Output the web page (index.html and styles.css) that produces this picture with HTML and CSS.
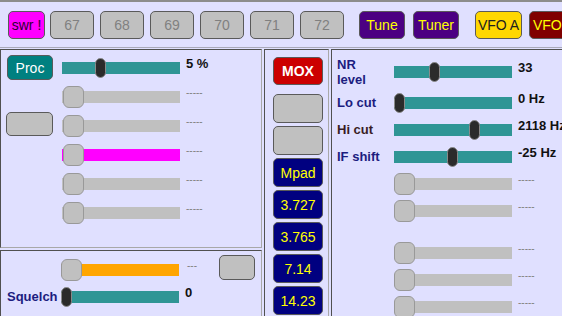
FILE: index.html
```html
<!DOCTYPE html>
<html lang="en">
<head>
    <meta charset="UTF-8">
    <meta name="viewport" content="width=device-width, initial-scale=1.0">
    <title>Radio Control</title>
    <link rel="stylesheet" href="styles.css">
</head>
<body>
    <div class="topbar">
        <button class="btn swr">swr !</button>
        <div class="mem">
            <button class="btn grey">67</button>
            <button class="btn grey">68</button>
            <button class="btn grey">69</button>
            <button class="btn grey">70</button>
            <button class="btn grey">71</button>
            <button class="btn grey">72</button>
        </div>
        <button class="btn tune">Tune</button>
        <button class="btn tune tuner">Tuner</button>
        <button class="btn vfoa">VFO A</button>
        <button class="btn vfob">VFO B</button>
    </div>

    <div class="main">
        <div class="leftcol">
            <div class="panel upper">
                <div class="row">
                    <div class="bcell"><button class="btn proc">Proc</button></div>
                    <div class="track teal"><span class="thumb dark" style="left:33px"></span></div>
                    <span class="val">5 %</span>
                </div>
                <div class="row">
                    <div class="bcell"></div>
                    <div class="track grey"><span class="thumb pale" style="left:1px"></span></div>
                    <span class="val none">-----</span>
                </div>
                <div class="row">
                    <div class="bcell"><button class="btn grey side"></button></div>
                    <div class="track grey"><span class="thumb pale" style="left:1px"></span></div>
                    <span class="val none">-----</span>
                </div>
                <div class="row">
                    <div class="bcell"></div>
                    <div class="track magenta"><span class="thumb pale" style="left:1px"></span></div>
                    <span class="val none">-----</span>
                </div>
                <div class="row">
                    <div class="bcell"></div>
                    <div class="track grey"><span class="thumb pale" style="left:1px"></span></div>
                    <span class="val none">-----</span>
                </div>
                <div class="row">
                    <div class="bcell"></div>
                    <div class="track grey"><span class="thumb pale" style="left:1px"></span></div>
                    <span class="val none">-----</span>
                </div>
            </div>
            <div class="panel lower">
                <div class="lrow">
                    <span class="lbl"></span>
                    <div class="track orange"><span class="thumb pale" style="left:0px"></span></div>
                    <span class="val none lval">---</span>
                    <button class="btn grey small"></button>
                </div>
                <div class="lrow">
                    <span class="lbl">Squelch</span>
                    <div class="track teal"><span class="thumb dark" style="left:0px"></span></div>
                    <span class="val lval zero">0</span>
                </div>
            </div>
        </div>

        <div class="panel middle">
            <button class="btn mox">MOX</button>
            <button class="btn grey">&nbsp;</button>
            <button class="btn grey">&nbsp;</button>
            <button class="btn navy">Mpad</button>
            <button class="btn navy">3.727</button>
            <button class="btn navy">3.765</button>
            <button class="btn navy">7.14</button>
            <button class="btn navy">14.23</button>
        </div>

        <div class="panel right">
            <div class="rrow tall">
                <span class="lbl">NR<br>level</span>
                <div class="track teal"><span class="thumb dark" style="left:35px"></span></div>
                <span class="val">33</span>
            </div>
            <div class="rrow">
                <span class="lbl">Lo cut</span>
                <div class="track teal"><span class="thumb dark" style="left:0px"></span></div>
                <span class="val">0 Hz</span>
            </div>
            <div class="rrow">
                <span class="lbl hi">Hi cut</span>
                <div class="track teal"><span class="thumb dark" style="left:75px"></span></div>
                <span class="val">2118 Hz</span>
            </div>
            <div class="rrow">
                <span class="lbl">IF shift</span>
                <div class="track teal"><span class="thumb dark" style="left:53px"></span></div>
                <span class="val">-25 Hz</span>
            </div>
            <div class="rrow">
                <span class="lbl"></span>
                <div class="track grey"><span class="thumb pale" style="left:0px"></span></div>
                <span class="val none">-----</span>
            </div>
            <div class="rrow">
                <span class="lbl"></span>
                <div class="track grey"><span class="thumb pale" style="left:0px"></span></div>
                <span class="val none">-----</span>
            </div>
            <div class="spacer"></div>
            <div class="rrow">
                <span class="lbl"></span>
                <div class="track grey"><span class="thumb pale" style="left:0px"></span></div>
                <span class="val none">-----</span>
            </div>
            <div class="rrow">
                <span class="lbl"></span>
                <div class="track grey"><span class="thumb pale" style="left:0px"></span></div>
                <span class="val none">-----</span>
            </div>
            <div class="rrow">
                <span class="lbl"></span>
                <div class="track grey"><span class="thumb pale" style="left:0px"></span></div>
                <span class="val none">-----</span>
            </div>
        </div>
    </div>
</body>
</html>
```

FILE: styles.css
```css
body{
    margin:0;
    background:#e0e0ff;
    font-family:"Liberation Sans", Arial, sans-serif;
    overflow:hidden;
    width:620px;
}

/* buttons */
.btn{
    box-sizing:border-box;
    height:28px;
    padding:0;
    border:1px solid #5a5a5a;
    border-radius:5px;
    font-family:inherit;
    font-size:14px;
    flex-shrink:0;
}
.grey{
    background:#c0c0c0;
    color:#808080;
}

/* top bar */
.topbar{
    display:flex;
    align-items:center;
    height:45px;
    padding-left:8px;
    border-top:2px solid #8c8c8c;
    border-bottom:1px solid #a9a9b9;
}
.swr{
    width:37px;
    background:#ff00ff;
    color:#300030;
}
.mem{
    display:flex;
    gap:6px;
    margin-left:5px;
}
.mem .btn{
    width:44px;
}
.tune{
    width:46px;
    margin-left:15px;
    background:#4b0082;
    color:#ffff00;
}
.tuner{
    margin-left:8px;
}
.vfoa{
    width:47px;
    margin-left:16px;
    background:#ffd700;
    color:#202020;
}
.vfob{
    width:50px;
    margin-left:7px;
    background:#800000;
    color:#ffff00;
}

/* panels */
.main{
    display:grid;
    grid-template-columns:262px 65px 290px;
    column-gap:2px;
    height:280px;
    margin-top:1px;
}
.panel{
    box-sizing:border-box;
    border:1px solid;
    border-color:#505050 #a8a8a8 #a8a8a8 #505050;
}
.leftcol{
    display:flex;
    flex-direction:column;
    gap:2px;
}
.upper{
    height:199px;
    padding:3px 0 0 5px;
}
.lower{
    flex:1;
    padding:5px 0 0 6px;
}
.middle{
    display:flex;
    flex-direction:column;
    gap:3px;
    padding:7px 0 0 8px;
}
.right{
    padding:5px 0 0 5px;
}

/* rows */
.row,.rrow,.lrow{
    display:flex;
    align-items:center;
    height:29px;
}
.rrow,.lrow{
    height:27px;
}
.rrow.tall{
    height:34px;
}
.spacer{
    height:15px;
}
.bcell{
    width:56px;
    flex-shrink:0;
}
.proc{
    width:46px;
    height:25px;
    margin-left:1px;
    background:#008080;
    color:#fff;
}
.side{
    width:47px;
    height:24px;
}
.small{
    width:36px;
    height:25px;
    margin-bottom:5px;
}
.lbl{
    width:57px;
    flex-shrink:0;
    font-size:13px;
    font-weight:bold;
    line-height:15px;
    color:#1c1c80;
}
.lbl.hi{
    color:#3a1c24;
}
.lrow .lbl{
    width:54px;
}

/* sliders */
.track{
    position:relative;
    width:118px;
    height:12px;
    flex-shrink:0;
}
.teal{ background:#2f9595; }
.grey.track{ background:#c0c0c0; }
.magenta{ background:#ff00ff; }
.orange{ background:#ffa500; }
.thumb{
    position:absolute;
    box-sizing:border-box;
}
.thumb.dark{
    top:-4px;
    width:11px;
    height:20px;
    background:#2b2b2b;
    border:1px solid #8a8a8a;
    border-radius:6px;
}
.thumb.pale{
    top:-5px;
    width:21px;
    height:22px;
    background:#c0c0c0;
    border:1px solid #999;
    border-radius:6px;
}
.val{
    margin-left:6px;
    margin-bottom:9px;
    font-size:13px;
    font-weight:bold;
    color:#111;
    white-space:nowrap;
}
.val.none{
    font-size:10px;
    font-weight:normal;
    color:#808080;
}
.lval{
    width:32px;
    margin-left:8px;
}
.zero{
    margin-left:6px;
}

/* middle column */
.middle .btn{
    width:50px;
    height:29px;
}
.mox{
    margin-bottom:6px;
    background:#cc0000;
    color:#fff;
    font-weight:bold;
}
.middle .mox{
    height:28px;
}
.navy{
    background:#000080;
    color:#ffff00;
}
```
